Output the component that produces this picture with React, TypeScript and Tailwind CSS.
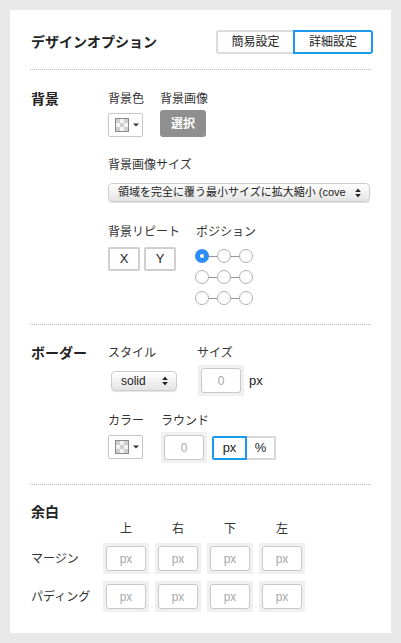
import React from 'react';

const FONT = { fontFamily: '"Liberation Sans", "Noto Sans CJK JP", sans-serif' };

const Checker: React.FC = () => (
  <svg width="14" height="14" viewBox="0 0 14 14">
    <rect x="0.5" y="0.5" width="13" height="13" fill="#f4f4f4" stroke="#8a8a8a" />
    <rect x="1" y="1" width="4" height="4" fill="#cfcfcf" />
    <rect x="9" y="1" width="4" height="4" fill="#cfcfcf" />
    <rect x="5" y="5" width="4" height="4" fill="#cfcfcf" />
    <rect x="1" y="9" width="4" height="4" fill="#cfcfcf" />
    <rect x="9" y="9" width="4" height="4" fill="#cfcfcf" />
  </svg>
);

const ColorPicker: React.FC<{ className?: string }> = ({ className = '' }) => (
  <div
    className={`flex h-[24px] w-[35px] items-center gap-[4px] rounded-[2px] border border-[#c6c6c6] bg-white pl-[6px] ${className}`}
  >
    <Checker />
    <svg width="6" height="4" viewBox="0 0 6 4">
      <path d="M0 0.5 L6 0.5 L3 3.5 Z" fill="#333" />
    </svg>
  </div>
);

const UpDown: React.FC = () => (
  <svg width="6" height="10" viewBox="0 0 6 10" className="shrink-0">
    <path d="M3 0.5 L5.8 4 L0.2 4 Z" fill="#222" />
    <path d="M3 9.5 L5.8 6 L0.2 6 Z" fill="#222" />
  </svg>
);

const MacSelect: React.FC<{ label: string; className?: string }> = ({ label, className = '' }) => (
  <div
    className={`flex items-center justify-between gap-[4px] rounded-[4px] border border-[#cdcdcd] bg-gradient-to-b from-white to-[#e4e4e4] pl-[9px] pr-[8px] leading-none text-[#222] shadow-[0_1px_1px_rgba(0,0,0,0.12)] ${className}`}
  >
    <span className="min-w-0 whitespace-nowrap">{label}</span>
    <UpDown />
  </div>
);

const NumInput: React.FC<{ placeholder: string }> = ({ placeholder }) => (
  <div className="flex h-[31px] w-[46px] bg-[#f0f0f0] p-[3px]">
    <div className="flex flex-1 items-center justify-center rounded-[3px] border border-[#c8c8c8] bg-white text-[12px] text-[#a8a8a8]">
      {placeholder}
    </div>
  </div>
);

const Radio: React.FC<{ checked?: boolean }> = ({ checked }) =>
  checked ? (
    <div className="flex size-[14px] items-center justify-center rounded-full bg-[#2e8ef5]">
      <div className="size-[4px] rounded-full bg-white" />
    </div>
  ) : (
    <div className="size-[14px] rounded-full border-[1.5px] border-[#b0b0b0] bg-white" />
  );

const Divider: React.FC = () => <div className="border-t border-dotted border-[#b8b8b8]" />;

const Label: React.FC<{ children: React.ReactNode; className?: string }> = ({ children, className = '' }) => (
  <div className={`text-[12px] leading-[16px] text-[#333] ${className}`}>{children}</div>
);

const SectionTitle: React.FC<{ children: React.ReactNode }> = ({ children }) => (
  <div className="pl-[1px] text-[14px] font-bold leading-[16px] text-[#222]">{children}</div>
);

export default function App() {
  const sides = ['上', '右', '下', '左'];
  return (
    <div className="min-h-[643px] bg-[#e8e8e8] p-[10px]" style={FONT}>
      <div className="bg-white px-[20px] pb-[21px] pt-[20px]">
        {/* header */}
        <div className="flex h-[24px] items-center justify-between">
          <div className="pl-[1px] text-[14px] font-bold text-[#222]">デザインオプション</div>
          <div className="-mr-[2px] flex h-[24px] text-[12px] text-[#222]">
            <div className="flex w-[77px] items-center justify-center rounded-l-[3px] border-2 border-r-0 border-[#dcdcdc]">
              簡易設定
            </div>
            <div className="flex w-[80px] items-center justify-center rounded-r-[3px] border-2 border-[#1a9bf0]">
              詳細設定
            </div>
          </div>
        </div>
        <div className="mt-[15px]">
          <Divider />
        </div>

        {/* 背景 */}
        <div className="flex pb-[19px] pt-[21px]">
          <div className="w-[78px]">
            <SectionTitle>背景</SectionTitle>
          </div>
          <div className="flex flex-col">
            <div className="flex">
              <div className="w-[52px]">
                <Label>背景色</Label>
                <ColorPicker className="mt-[6px]" />
              </div>
              <div>
                <Label>背景画像</Label>
                <div className="mt-[3px] flex h-[27px] w-[46px] items-center justify-center rounded-[3px] bg-[#8f8f8f] text-[12px] font-bold text-white">
                  選択
                </div>
              </div>
            </div>
            <Label className="mt-[20px]">背景画像サイズ</Label>
            <MacSelect
              label="領域を完全に覆う最小サイズに拡大縮小 (cove"
              className="mt-[10px] h-[19px] w-[262px] text-[11px]"
            />
            <div className="mt-[22px] flex">
              <div className="w-[88px]">
                <Label>背景リピート</Label>
                <div className="mt-[7px] flex gap-[4px]">
                  {['X', 'Y'].map(t => (
                    <div
                      key={t}
                      className="flex h-[24px] w-[32px] items-center justify-center rounded-[2px] border-2 border-[#cfcfcf] bg-white text-[13px] text-[#222]"
                    >
                      {t}
                    </div>
                  ))}
                </div>
              </div>
              <div>
                <Label>ポジション</Label>
                <div className="-ml-[1px] mt-[9px] flex flex-col gap-[7px]">
                  {[0, 1, 2].map(r => (
                    <div key={r} className="flex items-center">
                      <Radio checked={r === 0} />
                      <div className="h-px w-[8px] bg-[#999]" />
                      <Radio />
                      <div className="h-px w-[8px] bg-[#999]" />
                      <Radio />
                    </div>
                  ))}
                </div>
              </div>
            </div>
          </div>
        </div>
        <Divider />

        {/* ボーダー */}
        <div className="flex pb-[21px] pt-[20px]">
          <div className="w-[78px]">
            <SectionTitle>ボーダー</SectionTitle>
          </div>
          <div className="flex flex-col">
            <div className="flex">
              <Label className="w-[89px]">スタイル</Label>
              <Label>サイズ</Label>
            </div>
            <div className="mt-[4px] flex items-center">
              <div className="w-[90px]">
                <MacSelect label="solid" className="ml-[3px] h-[20px] w-[66px] text-[12px]" />
              </div>
              <NumInput placeholder="0" />
              <span className="ml-[5px] text-[13px] text-[#222]">px</span>
            </div>
            <div className="mt-[17px] flex">
              <div className="w-[53px]">
                <Label>カラー</Label>
                <ColorPicker className="mt-[6px]" />
              </div>
              <div>
                <Label>ラウンド</Label>
                <div className="mt-[3px] flex items-center">
                  <NumInput placeholder="0" />
                  <div className="ml-[5px] flex h-[24px] text-[13px] text-[#222]">
                    <div className="flex w-[35px] items-center justify-center rounded-l-[2px] border-2 border-[#1a9bf0]">
                      px
                    </div>
                    <div className="flex w-[29px] items-center justify-center rounded-r-[2px] border-2 border-l-0 border-[#d8d8d8]">
                      %
                    </div>
                  </div>
                </div>
              </div>
            </div>
          </div>
        </div>
        <Divider />

        {/* 余白 */}
        <div className="pt-[19px]">
          <div className="h-[17px]">
            <SectionTitle>余白</SectionTitle>
          </div>
          <div className="flex">
            <div className="w-[73px]" />
            <div className="flex gap-[6px]">
              {sides.map(s => (
                <Label key={s} className="w-[46px] text-center">
                  {s}
                </Label>
              ))}
            </div>
          </div>
          <div className="mt-[6px] flex flex-col gap-[7px]">
            {['マージン', 'パディング'].map(row => (
              <div key={row} className="flex items-center">
                <Label className="w-[73px] pl-[1px]">{row}</Label>
                <div className="flex gap-[6px]">
                  {sides.map(s => (
                    <NumInput key={s} placeholder="px" />
                  ))}
                </div>
              </div>
            ))}
          </div>
        </div>
      </div>
    </div>
  );
}
